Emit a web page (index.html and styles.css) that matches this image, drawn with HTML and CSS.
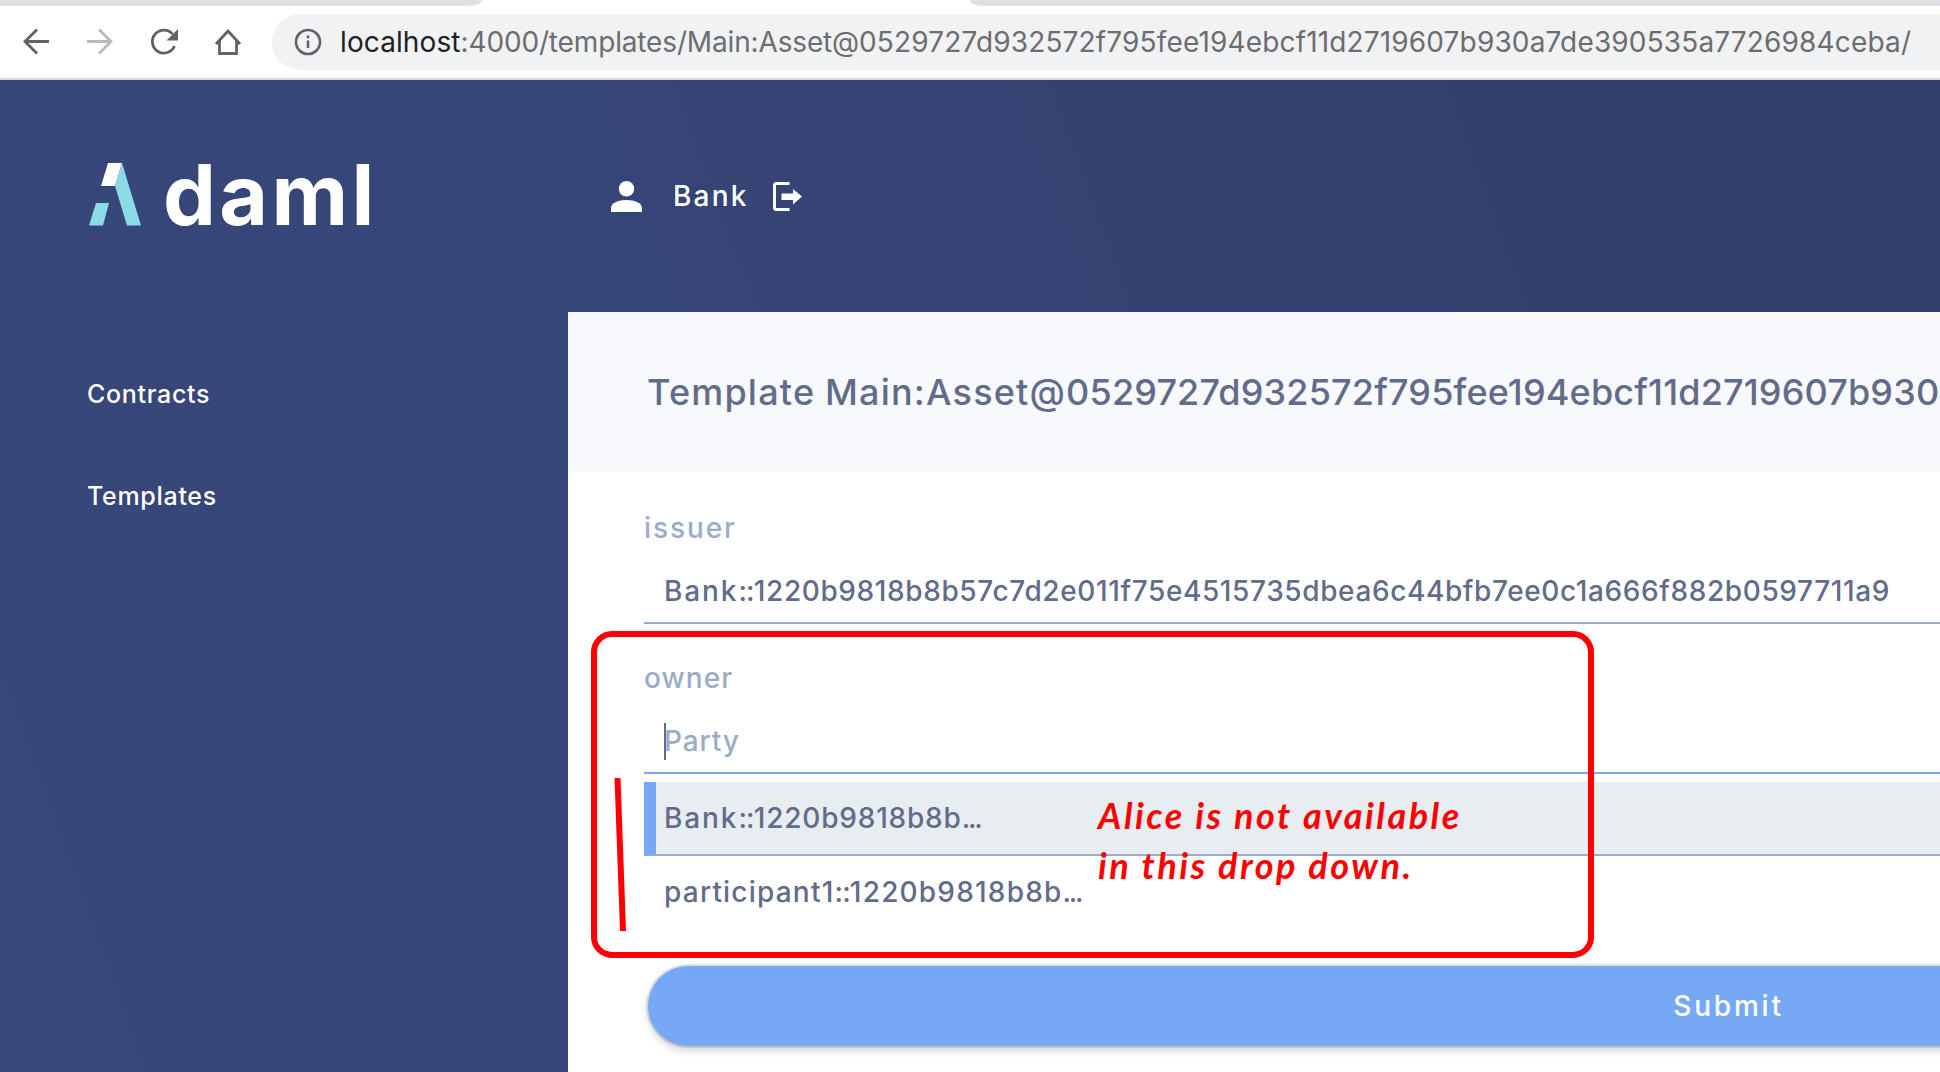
FILE: index.html
```html
<!DOCTYPE html>
<html lang="en">
<head>
<meta charset="utf-8">
<title>Daml Navigator</title>
<link rel="stylesheet" href="styles.css">
</head>
<body>
<div class="browser">
  <div class="tabs"><div class="tab-left"></div><div class="tab-right"></div></div>
  <div class="toolbar">
    <svg class="nav-icons" width="262" height="64" viewBox="0 0 262 64" fill="none" stroke="#5f6368" stroke-width="2.8">
      <path d="M49 31.5H25M37 19.500L25 31.500L37 43.500"/>
      <path stroke="#bababd" d="M87 31.500H111M99 19.500L111 31.500L99 43.500"/>
      <path d="M174.500 36A11.500 11.500 0 1 1 172.500 24"/>
      <path fill="#5f6368" stroke="none" d="M178 19V30.500H166.500Z"/>
      <path d="M216 34L228 21L240 34M219.500 31V43.500H236.500V31"/>
    </svg>
    <div class="address">
      <svg width="28" height="28" viewBox="0 0 28 28" fill="none" stroke="#5f6368" stroke-width="2.600"><circle cx="14" cy="14" r="12"/><path d="M14 12.500V20M14 7.500V10.200"/></svg>
      <span class="url"><b>localhost</b><span class="path">:4000/templates/Main:Asset@</span>0529727d932572f795fee194ebcf11d2719607b930a7de390535a7726984ceba/</span>
    </div>
  </div>
</div>
<div class="app">
  <aside class="sidebar">
    <div class="logo">
      <svg width="52" height="63" viewBox="0 0 52 63"><path fill="#fff" d="M19 0H33L26 23H12Z"/><path fill="#8bdbe6" d="M33 0L52 62.500H38L26 23ZM7 40H20L14 62.500H0Z"/></svg>
      <span>daml</span>
    </div>
    <nav><a>Contracts</a><a>Templates</a></nav>
  </aside>
  <main>
    <header class="session">
      <svg width="31" height="31" viewBox="0 0 31 31" fill="#fff"><circle cx="15.500" cy="7.700" r="7.700"/><path d="M0 31V27C0 22 7 19 15.500 19S31 22 31 27V31Z"/></svg>
      <span class="user">Bank</span>
      <svg width="29" height="29" viewBox="0 0 29 29"><path fill="none" stroke="#fff" stroke-width="3" d="M16.500 1.500H3.500Q1.500 1.500 1.500 3.500V25.500Q1.500 27.500 3.500 27.500H16.500"/><path fill="#fff" d="M8.500 11.500H20V7L29 14.500L20 22.500V18H8.500Z"/></svg>
    </header>
    <section class="panel">
      <h1><span class="words">Template Main:Asset@</span>0529727d932572f795fee194ebcf11d2719607b930a</h1>
      <form>
        <div class="field">
          <label class="issuer">issuer</label>
          <div class="input"><span class="prefix">Bank</span><span class="colons">::</span><span class="hash">1220b9818b8b57c7d2e011f75e4515735dbea6c44bfb7ee0c1a666f882b0597711a9</span></div>
        </div>
        <div class="field">
          <label>owner</label>
          <div class="input active"><i class="caret"></i>Party</div>
        </div>
        <ul class="options">
          <li class="selected"><span class="prefix">Bank</span><span class="colons">::</span>1220b9818b8b<span class="dots">...</span></li>
          <li>participant1<span class="colons">::</span>1220b9818b8b<span class="dots">...</span></li>
        </ul>
        <div class="submit">Submit</div>
      </form>
    </section>
  </main>
</div>
<div class="highlight"></div>
<svg class="marker" width="16" height="154" viewBox="0 0 16 154"><path stroke="#f00" stroke-width="6" d="M4.500 0L10 153"/></svg>
<p class="note">Alice is not available<br>in this drop down.</p>
</body>
</html>
```
FILE: styles.css
```css
* { box-sizing: border-box; }
body {
  margin: 0;
  width: 1940px;
  height: 1072px;
  overflow: hidden;
  position: relative;
  font-family: Inter, "Liberation Sans", sans-serif;
  font-size: 28px;
}
svg { flex: none; display: block; }

.browser { height: 80px; background: #fff; border-bottom: 2px solid #d9dadc; }
.tabs { height: 6px; display: flex; justify-content: space-between; }
.tabs div { background: #dfe0e5; }
.tab-left { width: 482px; border-bottom-right-radius: 14px 6px; }
.tab-right { width: 970px; border-bottom-left-radius: 14px 6px; }
.toolbar { height: 72px; display: flex; align-items: center; }
.nav-icons { margin: -1px 10px 0 0; }
.address {
  flex: 1;
  height: 56px;
  display: flex;
  align-items: center;
  gap: 18px;
  padding-left: 22px;
  background: #f1f2f4;
  border-radius: 28px 0 0 28px;
}
.url { color: #6b6d70; white-space: nowrap; letter-spacing: .15px; }
.url b { font-weight: 400; color: #202124; letter-spacing: .1px; }
.path { letter-spacing: -.15px; }

.app {
  height: 992px;
  display: flex;
  background: linear-gradient(70deg, #37487b 0%, #364577 40%, #303e69 100%);
  color: #fff;
  font-weight: 500;
}
.sidebar { width: 568px; flex: none; padding: 83px 0 0 87px; }
.logo { height: 180px; display: flex; align-items: flex-start; gap: 22px; padding-left: 2px; }
.logo span { font-size: 84px; font-weight: 700; line-height: 64px; letter-spacing: 3.4px; }
nav a { display: block; line-height: 102px; font-size: 25px; letter-spacing: .7px; }

main { flex: 1; min-width: 0; overflow: hidden; }
.session { height: 232px; display: flex; align-items: center; padding-left: 43px; }
.user { letter-spacing: 2.2px; margin: 0 24px 0 31px; }
.panel { height: 760px; background: #fff; color: #626c8a; }
h1 {
  margin: 0;
  height: 160px;
  line-height: 160px;
  padding-left: 79px;
  background: #f8f9fd;
  font-size: 36px;
  font-weight: 500;
  letter-spacing: .16px;
  white-space: nowrap;
}
.words { letter-spacing: 1.2px; word-spacing: -1px; }
form { padding: 36px 0 0 76px; }
.field { display: flex; flex-direction: column; gap: 12px; margin-bottom: 34px; }
label { height: 40px; line-height: 40px; color: #9bacc7; letter-spacing: 1.1px; }
.issuer { letter-spacing: 1.9px; }
.input {
  display: flex;
  align-items: center;
  height: 64px;
  padding-left: 20px;
  border-bottom: 2px solid #9bacc7;
  white-space: nowrap;
}
.prefix { letter-spacing: 1.9px; }
.colons { letter-spacing: -.8px; }
.hash { letter-spacing: .61px; }
.active { color: #9bacc7; border-color: #75a9f6; letter-spacing: .9px; }
.caret { width: 2px; height: 37px; margin-right: -2px; background: #626c8a; }
.options { list-style: none; margin: -26px 0 36px; padding: 0; }
.options li { height: 74px; line-height: 72px; padding-left: 20px; letter-spacing: 1.2px; }
.options .selected {
  background: #e8edf1;
  border-left: 12px solid #75a9f6;
  border-bottom: 2px solid #9bacc7;
  padding-left: 8px;
  letter-spacing: .8px;
}
.options .dots { letter-spacing: -2.2px; }
.submit {
  width: 2161px;
  height: 80px;
  margin-left: 4px;
  border-radius: 40px;
  background: #75a9f6;
  color: #fff;
  text-align: center;
  line-height: 80px;
  letter-spacing: 2.8px;
  box-shadow: 0 0 0 2px rgba(0, 0, 0, .1), 0 4px 8px rgba(0, 0, 0, .2);
}

.highlight {
  position: absolute;
  left: 591px;
  top: 631px;
  width: 1003px;
  height: 327px;
  border: 6px solid #f00;
  border-radius: 21px;
}
.marker { position: absolute; left: 613px; top: 778px; }
.note {
  position: absolute;
  left: 1098px;
  top: 790px;
  margin: 0;
  color: #f00;
  font: italic 700 36px/50px Lato, sans-serif;
  letter-spacing: 2.5px;
}
```
